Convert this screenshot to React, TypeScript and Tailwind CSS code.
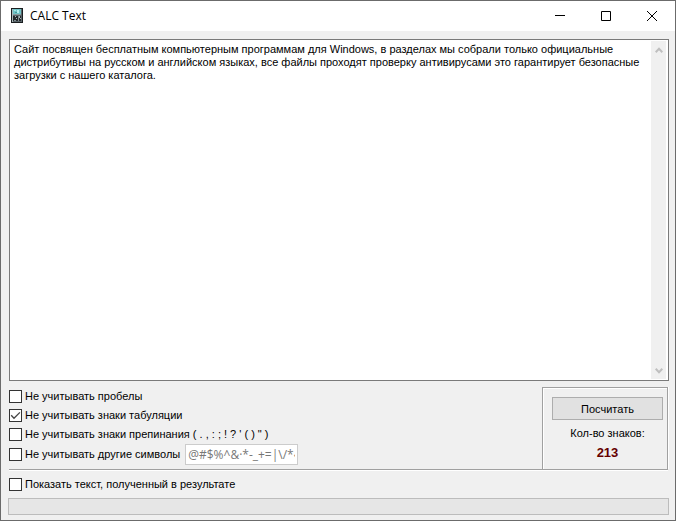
import { useState } from "react";
import type { ReactNode } from "react";

const SAMPLE =
  "Сайт посвящен бесплатным компьютерным программам для Windows, в разделах мы собрали только официальные дистрибутивы на русском и английском языках, все файлы проходят проверку антивирусами это гарантирует безопасные загрузки с нашего каталога.";

function CalculatorIcon() {
  return (
    <svg width="12" height="16" viewBox="0 0 12 16" shapeRendering="crispEdges" aria-hidden="true">
      <rect width="12" height="15" fill="#1a1e20" />
      <rect x="1" y="1" width="10" height="13" fill="#59656a" />
      <rect x="1" y="1" width="1" height="13" fill="#a9b7ba" />
      <rect x="2" y="1" width="8" height="5" fill="#6fc3c6" />
      <rect x="3" y="2" width="2" height="1" fill="#a8e8e8" />
      <rect x="6" y="2" width="2" height="3" fill="#b4eeee" />
      <rect x="4" y="4" width="2" height="1" fill="#4a9698" />
      <rect x="2" y="6" width="8" height="1" fill="#8d9a9d" />
      <rect x="2" y="8" width="8" height="5" fill="#24292c" />
      <path d="M4 8h1v1h-1zM8 8h1v2h-1zM5 10h1v1h-1zM9 10h1v1h-1z" fill="#a7b3b6" />
      <path d="M7 8h1v5h-1zM3 12h2v1h-2z" fill="#7f8c91" />
    </svg>
  );
}

function TitleBar() {
  return (
    <header className="flex h-[30px] items-center bg-white pl-[10px] font-['Open_Sans','Noto_Sans',sans-serif] text-black">
      <CalculatorIcon />
      <h1 className="ml-[7px] flex-1 text-[12px] leading-4">CALC Text</h1>
      <button type="button" aria-label="Свернуть" className="flex h-full w-[46px] items-center justify-center">
        <svg width="10" height="10" viewBox="0 0 10 10" stroke="black">
          <path d="M0 4.5h10" />
        </svg>
      </button>
      <button type="button" aria-label="Развернуть" className="flex h-full w-[46px] items-center justify-center">
        <svg width="10" height="10" viewBox="0 0 10 10" fill="none" stroke="black">
          <path d="M.5 .5h9v9h-9z" />
        </svg>
      </button>
      <button type="button" aria-label="Закрыть" className="flex h-full w-[46px] items-center justify-center">
        <svg width="10" height="10" viewBox="0 0 10 10" stroke="black">
          <path d="M0 0l10 10M10 0L0 10" />
        </svg>
      </button>
    </header>
  );
}

function Option({ label, checked = false }: { label: ReactNode; checked?: boolean }) {
  const [on, setOn] = useState(checked);
  return (
    <label className="flex items-center gap-[3px]">
      <span className="grid size-[13px] shrink-0">
        <input
          type="checkbox"
          checked={on}
          onChange={() => setOn(!on)}
          className="col-start-1 row-start-1 size-[13px] appearance-none border border-[#333333] bg-white"
        />
        {on && (
          <svg
            viewBox="0 0 13 13"
            fill="none"
            stroke="#444444"
            strokeWidth="1.3"
            className="pointer-events-none col-start-1 row-start-1 size-[13px]"
          >
            <path d="M2.2 6.3l2.8 3 5.9-5.9" />
          </svg>
        )}
      </span>
      <span className="whitespace-pre">{label}</span>
    </label>
  );
}

function Arrow({ down = false }: { down?: boolean }) {
  return (
    <button
      type="button"
      aria-label={down ? "Прокрутить вниз" : "Прокрутить вверх"}
      className="flex h-[17px] w-full items-center justify-center"
    >
      <svg width="8" height="6" viewBox="0 0 8 6" fill="none" stroke="#bfbfbf" strokeWidth="2">
        <path d={down ? "M.7 .8L4 4.2L7.3 .8" : "M.7 5.2L4 1.8L7.3 5.2"} />
      </svg>
    </button>
  );
}

export default function App() {
  return (
    <div className="flex min-h-screen flex-col border border-[#6b6b6b] bg-[#f0f0f0] font-['Liberation_Sans',Arial,sans-serif] text-[11px] leading-[13px] text-black">
      <TitleBar />
      <main className="flex flex-1 flex-col pt-2 pr-[6px] pb-[5px] pl-[7px]">
        <div className="ml-px flex flex-1 border border-[#7a7a7a] bg-white p-px pr-[2px]">
          <textarea
            aria-label="Текст"
            defaultValue={SAMPLE}
            className="flex-1 resize-none overflow-hidden pt-[2px] pl-[3px] text-[11px] leading-[13px] outline-none"
          />
          <div className="flex w-[15px] flex-col justify-between bg-[#f0f0f0]">
            <Arrow />
            <Arrow down />
          </div>
        </div>
        <section className="mt-[6px] mr-px ml-px flex justify-between border-b border-[#a0a0a0] shadow-[0_1px_0_white]">
          <div className="grid grid-rows-[19px_19px_19px_21px] pb-1">
            <Option label="Не учитывать пробелы" />
            <Option label="Не учитывать знаки табуляции" checked />
            <Option label={"Не учитывать знаки препинания ( . , : ; ! ? ' ( ) \" )"} />
            <div className="flex items-center gap-[5px]">
              <Option label="Не учитывать другие символы" />
              <input
                type="text"
                disabled
                aria-label="Другие символы"
                defaultValue="@#$%^&·*-_+=|\/*‹›"
                className="h-[21px] w-[113px] border border-[#cccccc] bg-white px-[2px] font-['Open_Sans',sans-serif] text-[12px] text-[#777777]"
              />
            </div>
          </div>
          <div className="flex w-[126px] flex-col items-center border border-b-0 border-[#a0a0a0] pt-[9px] pr-1 pl-[9px] shadow-[inset_1px_1px_0_white,1px_0_0_white]">
            <button type="button" className="h-[23px] w-full border border-[#adadad] bg-[#e1e1e1] pt-px">
              Посчитать
            </button>
            <p className="mt-[7px]">Кол-во знаков:</p>
            <output className="mt-[6px] text-[13px] font-bold text-[#660000]">213</output>
          </div>
        </section>
        <div className="ml-px flex h-7 items-center">
          <Option label="Показать текст, полученный в результате" />
        </div>
        <div
          role="progressbar"
          aria-label="Ход подсчёта"
          aria-valuenow={0}
          className="h-[17px] border border-[#bcbcbc] bg-[#e6e6e6]"
        />
      </main>
    </div>
  );
}
